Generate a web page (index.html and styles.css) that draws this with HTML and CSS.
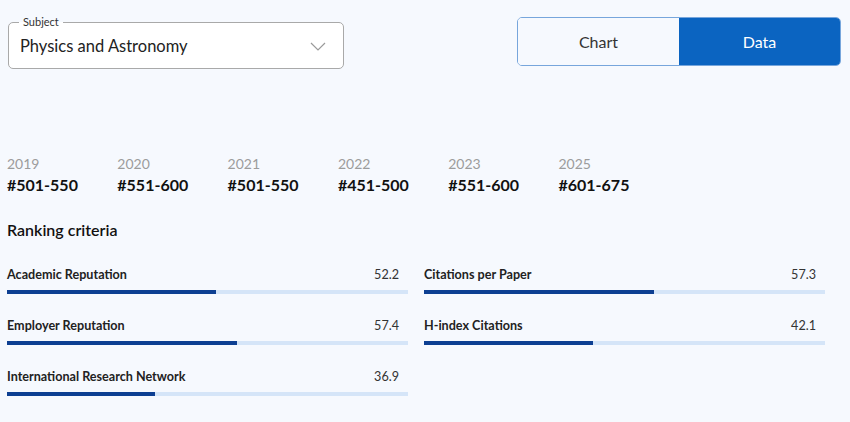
FILE: index.html
```html
<!DOCTYPE html>
<html>
<head>
  <title>Subject Rankings</title>
  <meta name="viewport" content="width=device-width, initial-scale=1">
  <link rel="stylesheet" href="styles.css">
</head>
<body>
  <div class="top-row">
    <div class="select-box">
      <span class="select-label">Subject</span>
      <span class="select-value">Physics and Astronomy</span>
      <svg class="chevron" width="16" height="9" viewBox="0 0 16 9">
        <path d="M1 1 L8 8 L15 1" fill="none" stroke="#9a9a9a" stroke-width="1.2"/>
      </svg>
    </div>

    <div class="toggle">
      <button class="toggle-btn">Chart</button>
      <button class="toggle-btn active">Data</button>
    </div>
  </div>

  <div class="years">
    <div class="year"><span class="year-label">2019</span><span class="year-rank">#501-550</span></div>
    <div class="year"><span class="year-label">2020</span><span class="year-rank">#551-600</span></div>
    <div class="year"><span class="year-label">2021</span><span class="year-rank">#501-550</span></div>
    <div class="year"><span class="year-label">2022</span><span class="year-rank">#451-500</span></div>
    <div class="year"><span class="year-label">2023</span><span class="year-rank">#551-600</span></div>
    <div class="year"><span class="year-label">2025</span><span class="year-rank">#601-675</span></div>
  </div>

  <h3 class="criteria-title">Ranking criteria</h3>

  <div class="criteria" id="criteria"></div>

  <script>
    const criteria = [
      { name: 'Academic Reputation', score: 52.2 },
      { name: 'Citations per Paper', score: 57.3 },
      { name: 'Employer Reputation', score: 57.4 },
      { name: 'H-index Citations', score: 42.1 },
      { name: 'International Research Network', score: 36.9 }
    ];

    const list = document.getElementById('criteria');
    for (const item of criteria) {
      const div = document.createElement('div');
      div.className = 'criterion';
      div.innerHTML = `
        <div class="criterion-head">
          <span class="criterion-name">${item.name}</span>
          <span class="criterion-score">${item.score}</span>
        </div>
        <div class="bar"><div class="bar-fill" style="width: ${item.score}%"></div></div>
      `;
      list.appendChild(div);
    }
  </script>
</body>
</html>
```

FILE: styles.css
```css
body {
  font-family: Lato, 'Liberation Sans', sans-serif;
  background: #f6f9fe;
  color: #222;
  margin: 0;
  padding: 0 9px 0 7px;
}

.top-row {
  display: flex;
  justify-content: space-between;
  align-items: flex-start;
  height: 86px;
}

.select-box {
  position: relative;
  margin: 22px 0 0 1px;
  width: 336px;
  height: 47px;
  box-sizing: border-box;
  border: 1px solid #a9a9a9;
  border-radius: 5px;
  background: white;
  display: flex;
  align-items: center;
  justify-content: space-between;
  padding: 0 17px 0 11px;
}

.select-label {
  position: absolute;
  top: -8px;
  left: 10px;
  padding: 0 4px;
  font-size: 11px;
  line-height: 14px;
  color: #333;
  background: linear-gradient(#f6f9fe 50%, white 50%);
}

.select-value {
  font-size: 16.5px;
  color: #222;
  margin-top: 1px;
}

.chevron {
  margin-top: 1px;
}

.toggle {
  display: flex;
  margin-top: 17px;
  width: 324px;
  height: 49px;
  box-sizing: border-box;
  border: 1px solid #77a6dc;
  border-radius: 5px;
  overflow: hidden;
}

.toggle-btn {
  flex: 1;
  border: none;
  background: #f6f9fe;
  color: #333;
  font-family: Lato, 'Liberation Sans', sans-serif;
  font-size: 16px;
  cursor: pointer;
}

.toggle-btn.active {
  background: #0b64c1;
  color: white;
}

.years {
  display: grid;
  grid-template-columns: repeat(6, 110.3px);
  margin-top: 68px;
}

.year {
  display: flex;
  flex-direction: column;
}

.year-label {
  font-size: 14px;
  line-height: 20px;
  color: #9c9c9c;
}

.year-rank {
  font-size: 16px;
  line-height: 22px;
  font-weight: 700;
  color: #111;
}

.criteria-title {
  font-size: 16px;
  font-weight: 600;
  margin: 22px 0 0;
  line-height: 24px;
  color: #111;
}

.criteria {
  display: grid;
  grid-template-columns: 401px 401px;
  column-gap: 16px;
  row-gap: 23px;
  margin-top: 24px;
}

.criterion-head {
  display: flex;
  justify-content: space-between;
  padding-right: 9px;
  font-size: 12.6px;
  line-height: 17px;
}

.criterion-name {
  font-weight: 700;
  color: #222;
}

.criterion-score {
  color: #333;
}

.bar {
  margin-top: 7px;
  height: 4px;
  background: #d5e5f8;
}

.bar-fill {
  height: 4px;
  background: #0d3f92;
}
```
